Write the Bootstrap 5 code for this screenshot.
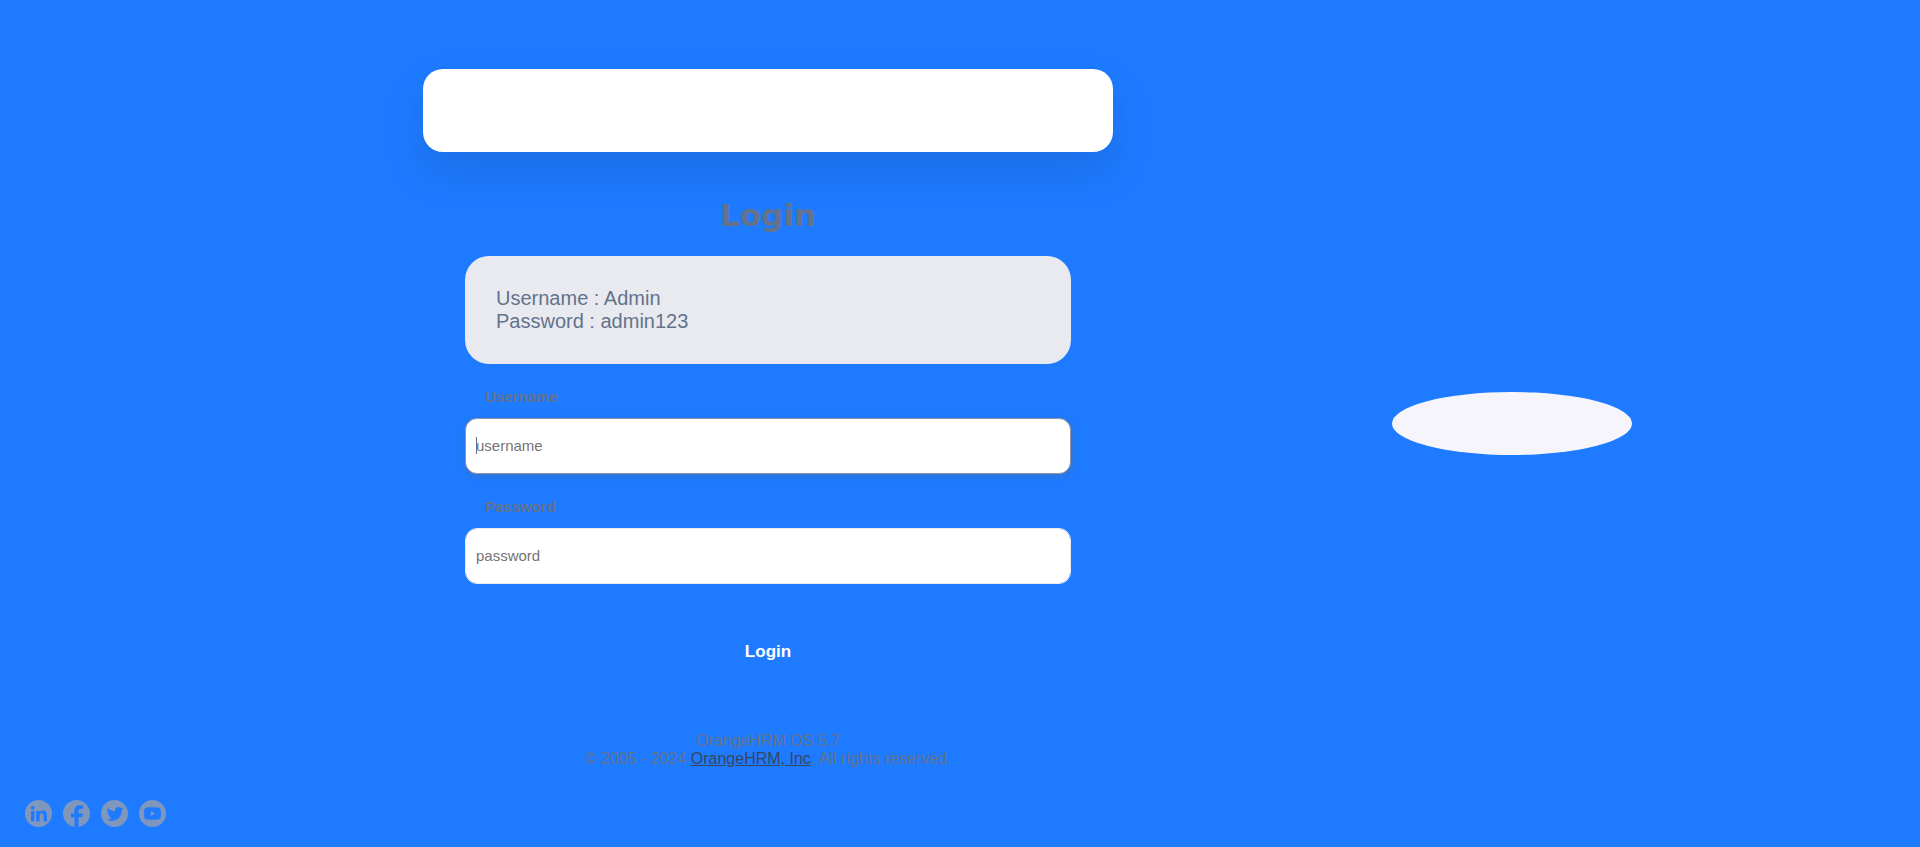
<!DOCTYPE html>
<html lang="en">
<head>
<meta charset="utf-8">
<meta name="viewport" content="width=device-width, initial-scale=1">
<title>OrangeHRM</title>
<link href="https://cdn.jsdelivr.net/npm/bootstrap@5.3.0/dist/css/bootstrap.min.css" rel="stylesheet">
<style>
body { background: #1e7bff; color: #64728c; font-family: "Liberation Sans", Arial, sans-serif; }
.login-page { display: grid; grid-template-columns: 15% 50% 27.5%; grid-template-rows: 1fr auto; min-height: 100vh; }
.login-area { grid-column: 2; padding-top: 69px; }
.login-inner { width: 100%; max-width: 690px; }
.brand-card { height: 83px; border: 0; border-radius: 20px; box-shadow: 0 20px 40px rgba(20, 50, 100, .16); }
.login-title { margin: 43px 0 21px; font: 700 31px/40px "DejaVu Sans", sans-serif; }
.login-body { padding: 0 42px; }
.hint-box { background: #e8eaef; border-radius: 24px; padding: 31px; font-size: 20px; line-height: 23px; }
.field-label { display: block; font-size: 15px; line-height: 18px; font-weight: 700; padding-left: 20px; margin: 24px 0 12px; }
.field-input.form-control { height: 56px; border: 1px solid #e8eaef; border-radius: 12px; padding: 0 10px 2px; font-size: 15px; color: #64728c; background-color: #fff; }
.field-input::placeholder { color: #757575; opacity: 1; }
.field-input.is-current { border-color: #8f96a3; box-shadow: 1px 2px 7px rgba(94, 104, 121, .38); background: linear-gradient(#64728c, #64728c) 10px 18px / 1px 17px no-repeat #fff; }
.login-btn.btn { border: 0; border-radius: 24px; height: 48px; margin: 44px 0 56px; padding: 0; font-size: 17px; line-height: 24px; font-weight: 700; color: #fff; }
.copyright { font-size: 16px; line-height: 18px; }
.copyright a { color: #38455d; }
.social { grid-column: 1 / 3; grid-row: 2; padding: 24px 25px 20px; gap: 11px; }
.social a { color: #8097bd; line-height: 0; }
.banner-area { grid-column: 3; grid-row: 1 / 3; }
.banner { width: 240px; height: 63px; border-radius: 50%; background: #f6f5fb; }
</style>
</head>
<body>
<div class="login-page">
  <main class="login-area d-flex justify-content-center">
    <div class="login-inner">
      <div class="brand-card card"></div>
      <h1 class="login-title text-center">Login</h1>
      <form class="login-body">
        <div class="hint-box">
          <p class="m-0">Username : Admin</p>
          <p class="m-0">Password : admin123</p>
        </div>
        <label class="field-label" for="username">Username</label>
        <input class="field-input is-current form-control" id="username" type="text" placeholder="username">
        <label class="field-label" for="password">Password</label>
        <input class="field-input form-control" id="password" type="password" placeholder="password">
        <button class="login-btn btn w-100" type="button">Login</button>
      </form>
      <footer class="copyright text-center">
        <p class="m-0">OrangeHRM OS 5.7</p>
        <p class="m-0">© 2005 - 2024 <a href="#">OrangeHRM, Inc</a>. All rights reserved.</p>
      </footer>
    </div>
  </main>
  <aside class="banner-area d-flex align-items-center justify-content-center">
    <div class="banner"></div>
  </aside>
  <nav class="social d-flex" aria-label="Social media">
    <a href="#" aria-label="LinkedIn"><svg width="27" height="27" viewBox="0 0 28 28" fill="currentColor"><path fill-rule="evenodd" d="M14 0a14 14 0 1 0 0 28a14 14 0 0 0 0-28zM8 6a2 2 0 1 1 0 4a2 2 0 0 1 0-4zM6.300 11.300h3.400v10.800h-3.400zM11.600 11.300h3.300v1.500c.8-1.200 2-1.800 3.500-1.800c3.200 0 4.400 1.900 4.400 4.700v6.400h-3.600v-5.800c0-1.600-.4-2.500-1.800-2.500c-1.500 0-2.200 1-2.200 2.600v5.700h-3.600z"/></svg></a>
    <a href="#" aria-label="Facebook"><svg width="27" height="27" viewBox="0 0 28 28" fill="currentColor"><path d="M28 14a14 14 0 1 0-16.200 13.800V18H8.200v-4h3.600v-3.100c0-3.500 2.100-5.400 5.300-5.400c1.500 0 3.700.3 3.700.3v3.400h-2.400c-1.700 0-2.300 1.100-2.300 2.200V14H20.500l-.6 4h-3.800v9.800A14 14 0 0 0 28 14z"/></svg></a>
    <a href="#" aria-label="Twitter"><svg width="27" height="27" viewBox="0 0 28 28" fill="currentColor"><path fill-rule="evenodd" d="M14 0a14 14 0 1 0 0 28a14 14 0 0 0 0-28zM23.300 8.900c-.4.900-1.100 1.500-1.800 2.100c.2 5.500-3.800 10.600-10 10.600c-2 0-3.900-.6-5.500-1.600c1.900.2 3.700-.3 5.200-1.400c-1.600 0-2.900-1-3.400-2.500c.6.100 1.100.1 1.600-.1c-1.700-.4-2.900-1.900-2.800-3.500c.5.300 1 .4 1.600.4c-1.600-1.100-2-3.200-1.100-4.800c1.800 2.200 4.400 3.600 7.400 3.700c-.5-2.300 1.200-4.500 3.500-4.500c1 0 2 .4 2.600 1.100c.8-.2 1.600-.4 2.300-.9c-.3.900-.8 1.500-1.600 2z"/></svg></a>
    <a href="#" aria-label="YouTube"><svg width="27" height="27" viewBox="0 0 28 28" fill="currentColor"><path fill-rule="evenodd" d="M14 0a14 14 0 1 0 0 28a14 14 0 0 0 0-28zM8 7.700Q14 7.100 20 7.700Q22.500 7.800 22.600 10.300Q22.900 14 22.600 17.500Q22.500 19.900 20 20.100Q14 20.700 8 20.100Q5.500 19.900 5.400 17.500Q5.100 14 5.400 10.300Q5.500 7.800 8 7.700zM12.200 11.400v5.400l4.300-2.700z"/></svg></a>
  </nav>
</div>
<script src="https://cdn.jsdelivr.net/npm/bootstrap@5.3.0/dist/js/bootstrap.bundle.min.js"></script>
</body>
</html>
